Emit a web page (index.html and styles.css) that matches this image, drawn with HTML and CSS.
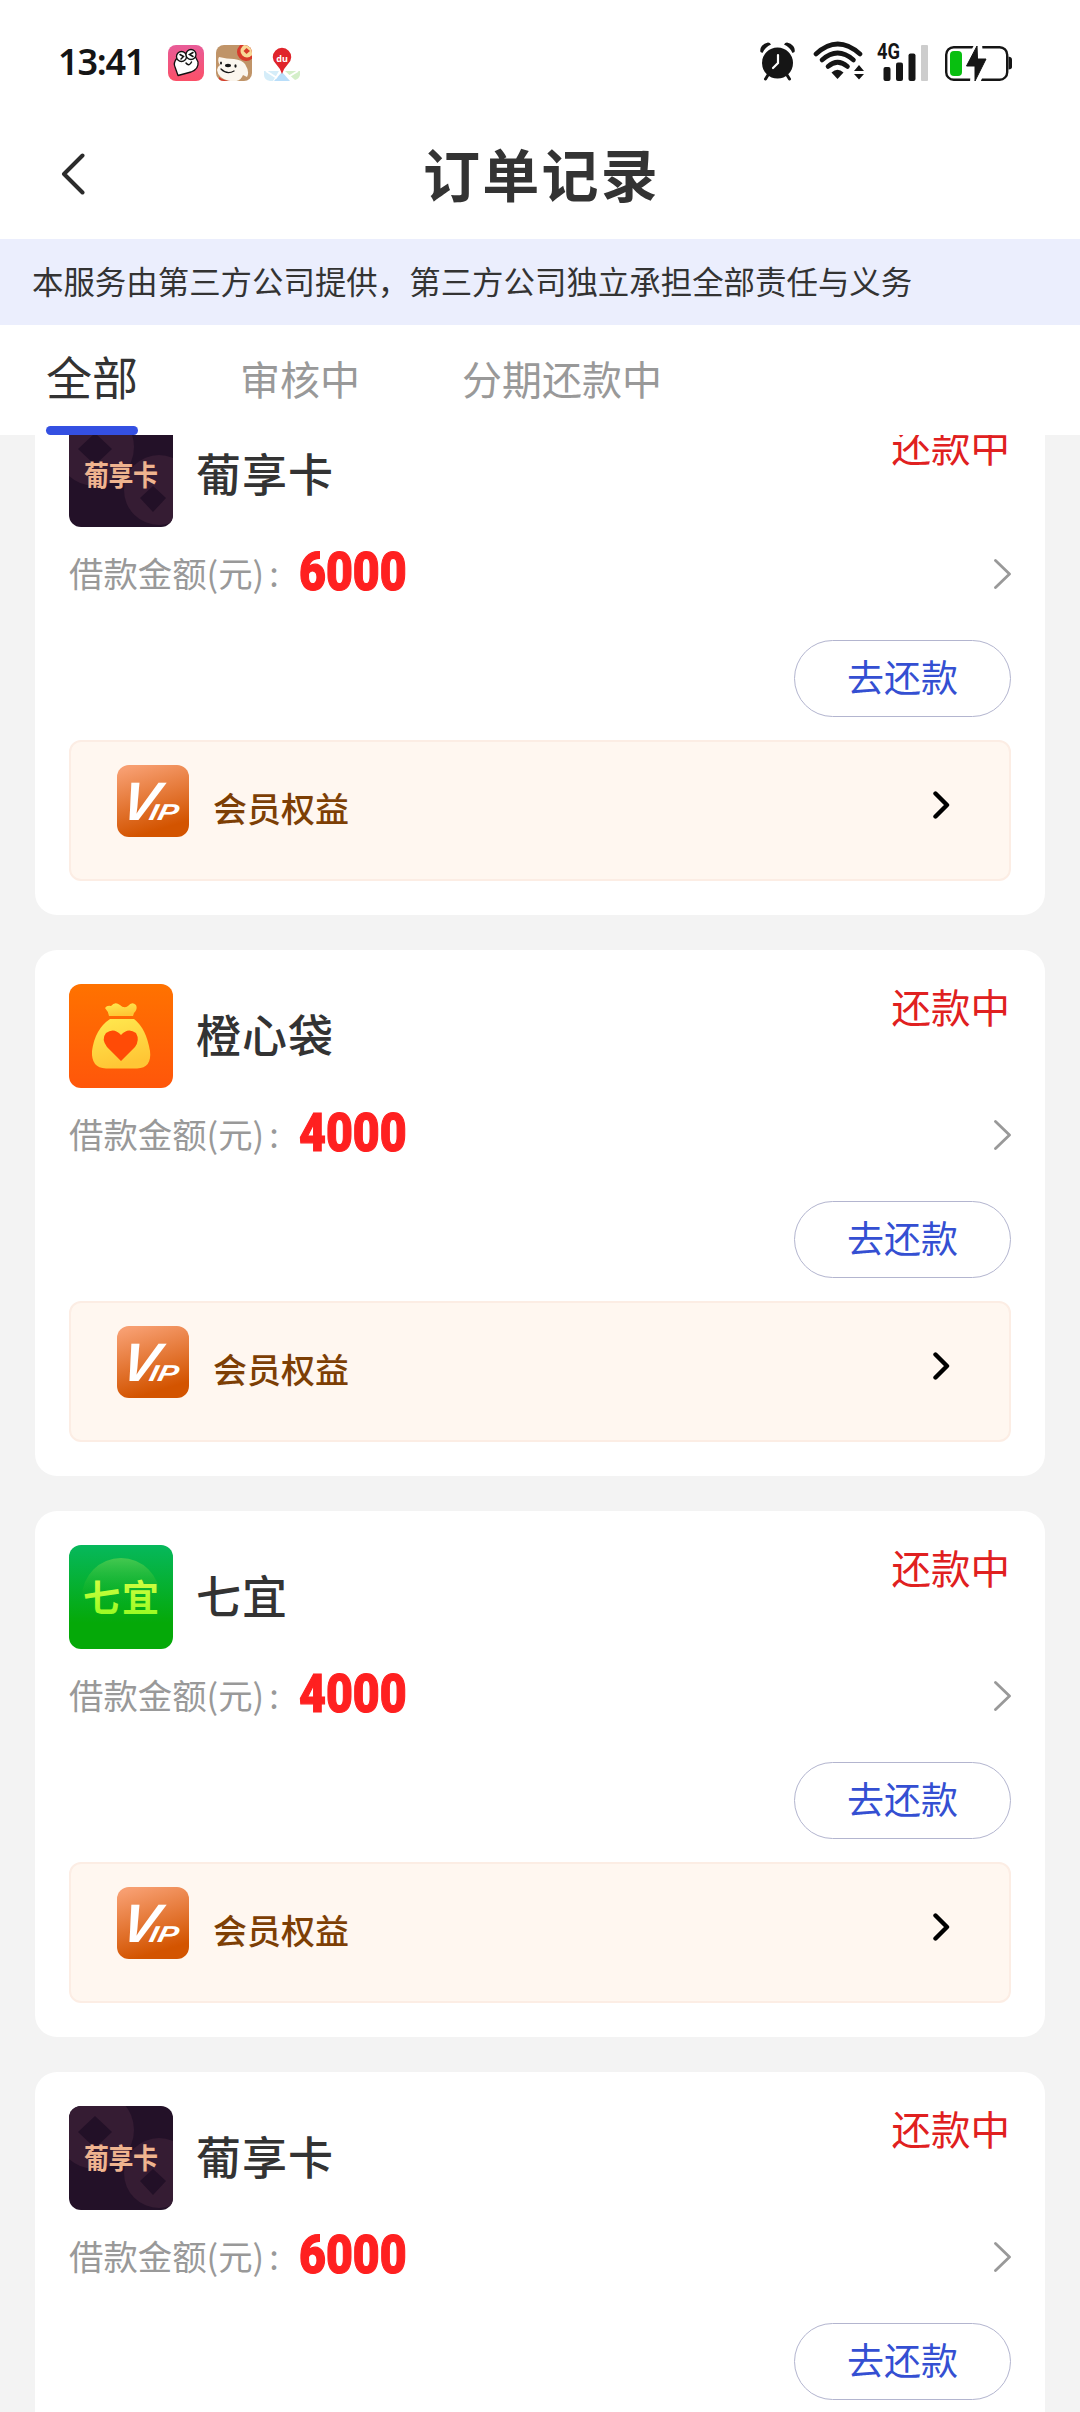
FILE: index.html
```html
<!DOCTYPE html>
<html lang="zh-CN">
<head>
    <meta charset="UTF-8">
    <meta name="viewport" content="width=device-width, initial-scale=1.0">
    <title>订单记录</title>
    <link rel="stylesheet" href="styles.css">
</head>
<body>
    <!-- Shared icons -->
    <svg class="defs" width="0" height="0">
        <defs>
            <linearGradient id="vipBg" x1="0.3" y1="0" x2="0.6" y2="1">
                <stop offset="0" stop-color="#f79e70"/>
                <stop offset="0.9" stop-color="#d35400"/>
            </linearGradient>
            <linearGradient id="bagBg" x1="0" y1="0" x2="0" y2="1">
                <stop offset="0" stop-color="#ff7200"/>
                <stop offset="1" stop-color="#ff560a"/>
            </linearGradient>
            <linearGradient id="bagFill" x1="0" y1="0" x2="0.3" y2="1">
                <stop offset="0" stop-color="#ffe94f"/>
                <stop offset="1" stop-color="#ffc635"/>
            </linearGradient>
            <linearGradient id="greenBg" x1="0" y1="0" x2="0" y2="1">
                <stop offset="0" stop-color="#06b85c"/>
                <stop offset="0.75" stop-color="#05a908"/>
            </linearGradient>
            <linearGradient id="greenGlow" x1="0" y1="0" x2="0" y2="1">
                <stop offset="0" stop-color="#45c850"/>
                <stop offset="0.6" stop-color="#0aae18" stop-opacity="0"/>
            </linearGradient>
            <linearGradient id="limeText" x1="0" y1="0" x2="0" y2="1">
                <stop offset="0" stop-color="#e2ff4a"/>
                <stop offset="1" stop-color="#8dfb1c"/>
            </linearGradient>
            <linearGradient id="pinkBg" x1="0" y1="0" x2="0" y2="1">
                <stop offset="0" stop-color="#e85c98"/>
                <stop offset="1" stop-color="#fb5068"/>
            </linearGradient>
            <clipPath id="appClip"><rect width="36" height="36" rx="8"/></clipPath>
            <symbol id="vip" viewBox="0 0 72 72">
                <rect width="72" height="72" rx="12" fill="url(#vipBg)"/>
                <g transform="translate(0 55) skewX(-12)">
                    <text class="vip-text" x="2" y="0" font-size="54" textLength="36" lengthAdjust="spacingAndGlyphs">V</text>
                    <text class="vip-text" x="31" y="0" font-size="23" textLength="29" lengthAdjust="spacingAndGlyphs">IP</text>
                </g>
            </symbol>
            <symbol id="logo-puxiang" viewBox="0 0 104 104">
                <rect width="104" height="104" fill="#231128"/>
                <circle cx="26" cy="24" r="39" fill="#351c33"/>
                <circle cx="90" cy="67" r="35" fill="#351c33"/>
                <path d="M9 26L26 10L43 26L26 42Z M71 75L84 63L97 75L84 89Z" fill="#221027"/>
                <text x="52" y="0" class="logo-text" font-size="25" fill="#efb48f" textLength="74" transform="translate(0 62.500) scale(1 1.150)">葡享卡</text>
            </symbol>
            <symbol id="logo-bag" viewBox="0 0 104 104">
                <rect width="104" height="104" fill="url(#bagBg)"/>
                <path d="M40 32Q39 27 36 24Q38 21 42 22Q46 17 51 21Q55 25 59 22Q63 17 67 21Q69 25 65 29L64 32Z" fill="url(#bagFill)"/>
                <path d="M41 35H65Q77 44 81 67Q83 84 68 84.500H37Q22 84 23 67Q26 45 41 35Z" fill="url(#bagFill)"/>
                <path d="M52 77L38 63Q32 55 37 49Q45 43 52 51Q59 43 67 49Q71 56 66 63Z" fill="#ff4b06"/>
            </symbol>
            <symbol id="logo-qiyi" viewBox="0 0 104 104">
                <rect width="104" height="104" fill="url(#greenBg)"/>
                <circle cx="52" cy="52" r="39" fill="url(#greenGlow)"/>
                <text x="52" y="67" class="logo-text" font-size="37" fill="url(#limeText)" textLength="76">七宜</text>
            </symbol>
            <symbol id="arrow" viewBox="0 0 17 30">
                <path d="M1.500 1.500L15.500 15L1.500 28.500" fill="none" stroke="#999" stroke-width="2.800" stroke-linecap="round" stroke-linejoin="round"/>
            </symbol>
            <symbol id="arrow-bold" viewBox="0 0 17 28">
                <path d="M2.500 2.500L14 14L2.500 25.500" fill="none" stroke="#000" stroke-width="4.400" stroke-linecap="round" stroke-linejoin="round"/>
            </symbol>
        </defs>
    </svg>

    <div class="status-bar">
        <span class="time">13:41</span>
        <div class="apps">
            <svg width="36" height="36" viewBox="0 0 36 36">
                <rect width="36" height="36" rx="8" fill="url(#pinkBg)"/>
                <path d="M9 13Q5 18 7 22L10 30.500L23 27Q31 24 30 17L27 11Z" fill="#fff" stroke="#111" stroke-width="1.300" stroke-linejoin="round"/>
                <circle cx="13.500" cy="11.500" r="5" fill="#fff" stroke="#111" stroke-width="1.300"/>
                <circle cx="23" cy="9.500" r="5" fill="#fff" stroke="#111" stroke-width="1.300"/>
                <path d="M12 9.500L15.500 11.500L13 14M25 7.500L21.500 9.500L25 11.500M18 18Q21 22 23.500 17" fill="none" stroke="#111" stroke-width="1.500" stroke-linecap="round"/>
            </svg>
            <svg width="36" height="36" viewBox="0 0 36 36">
                <g clip-path="url(#appClip)">
                    <rect width="36" height="36" fill="#c09468"/>
                    <path d="M3 12Q11 14 18 14Q26 15 29 19Q34 27 31 32L27 30Q24 38 13 36Q2 33 1 25Q1 22 4 20Q1 16 3 12Z" fill="#fbf6ee"/>
                    <circle cx="30" cy="7" r="9" fill="#d8392b"/>
                    <circle cx="31" cy="6" r="6.500" fill="#f8d796"/>
                    <path d="M30.500 3L34 6L30.500 9L27.500 6Z" fill="#d8392b"/>
                    <ellipse cx="12" cy="20.500" rx="3" ry="1.700" fill="#171717"/>
                    <ellipse cx="5" cy="18" rx="1" ry="1.600" fill="#171717"/>
                    <ellipse cx="19.500" cy="21" rx="1.100" ry="1.700" fill="#171717"/>
                    <path d="M5 24Q11 30 18 26" fill="none" stroke="#171717" stroke-width="1.300" stroke-linecap="round"/>
                    <path d="M3 32Q8 36 15 36H3Z" fill="#d8392b"/>
                </g>
            </svg>
            <svg width="36" height="36" viewBox="0 0 36 36">
                <path d="M0 26H15L9 36H6Q0 35 0 30Z" fill="#d5edf9"/>
                <path d="M21 26H36V30Q35 34 31 35Z" fill="#d4efc9"/>
                <path d="M18 27L26 36H10Z" fill="#b9defa"/>
                <path d="M2 26L13 33M34 26L24 32" stroke="#fff" stroke-width="2"/>
                <path d="M18 29Q16 23 12 19A9.200 9.200 0 1 1 24 19Q20 23 18 29Z" fill="#e0242b"/>
                <text x="18" y="17" class="pin-text">du</text>
            </svg>
        </div>
        <div class="system">
            <svg width="38" height="40" viewBox="0 0 38 40">
                <circle cx="19.500" cy="22" r="15.500" fill="#151515"/>
                <path d="M2.500 11A10 8 0 0 1 10 1.500Q12 1.500 13 3.500Q7 6 4.500 12ZM36.500 11A10 8 0 0 0 29 1.500Q27 1.500 26 3.500Q32 6 34.500 12Z" fill="#151515"/>
                <path d="M10 34L7.500 38M29 34L31.500 38" stroke="#151515" stroke-width="3" stroke-linecap="round"/>
                <path d="M20 14V22L15 27" fill="none" stroke="#fff" stroke-width="2.200" stroke-linecap="round"/>
            </svg>
            <svg width="52" height="40" viewBox="0 0 52 40">
                <g fill="none" stroke="#151515" stroke-width="4.600" stroke-linecap="round">
                    <path d="M3 13Q24.500 -7 47 13"/>
                    <path d="M9 19Q24.500 5 40.500 19"/>
                    <path d="M15 25.500Q24.500 17 34.500 25.500"/>
                </g>
                <path d="M18.500 31.500Q24.500 26 30.500 31.500L24.500 38Z" fill="#151515"/>
                <path d="M41 30L46 24L51 30ZM41 33L46 38.500L51 33Z" fill="#151515"/>
            </svg>
            <svg class="signal" width="54" height="40" viewBox="0 0 54 40">
                <text x="2" y="18" class="net-text" textLength="23" lengthAdjust="spacingAndGlyphs">4G</text>
                <rect x="8.500" y="26" width="7" height="14" rx="2" fill="#151515"/>
                <rect x="21" y="21.500" width="7" height="18.500" rx="2" fill="#151515"/>
                <rect x="33.500" y="12.500" width="7" height="27.500" rx="2" fill="#151515"/>
                <rect x="46" y="4" width="7" height="36" rx="1" fill="#cdcdcd"/>
            </svg>
            <svg width="68" height="40" viewBox="0 0 68 40">
                <rect x="1.200" y="6.200" width="61" height="32.500" rx="7.500" fill="#fff" stroke="#151515" stroke-width="2.400"/>
                <path d="M63.500 15.500Q67 16 67 18.500V26Q67 28 63.500 28.500Z" fill="#151515"/>
                <rect x="5" y="10" width="12" height="25" rx="4" fill="#08bf10"/>
                <path d="M30 2L17 28H26L25 41L35 42L46 16.500H38L37 2Z" fill="#fff"/>
                <path d="M32 5L21.500 25H30V40L41 18H32.500Z" fill="#151515" stroke="#151515" stroke-width="1" stroke-linejoin="round"/>
            </svg>
        </div>
    </div>

    <header class="nav">
        <svg class="back" width="24" height="42" viewBox="0 0 24 42">
            <path d="M21.500 2.500L3 21L21.500 39.500" fill="none" stroke="#2b2b2b" stroke-width="4" stroke-linecap="round" stroke-linejoin="round"/>
        </svg>
        <h1>订单记录</h1>
    </header>

    <div class="notice">本服务由第三方公司提供，第三方公司独立承担全部责任与义务</div>

    <nav class="tabs">
        <a class="tab active">全部</a>
        <a class="tab">审核中</a>
        <a class="tab">分期还款中</a>
    </nav>

    <main class="list">
        <div class="scroll">
            <section class="card">
                <div class="card-head">
                    <svg class="logo"><use href="#logo-puxiang"/></svg>
                    <h2>葡享卡</h2>
                    <span class="status">还款中</span>
                </div>
                <div class="amount-row">
                    <span class="label">借款金额(元)<i>:</i></span>
                    <span class="amount">6000</span>
                    <svg class="arrow"><use href="#arrow"/></svg>
                </div>
                <div class="actions"><button class="button">去还款</button></div>
                <div class="vip">
                    <svg class="vip-icon"><use href="#vip"/></svg>
                    <span>会员权益</span>
                    <svg class="arrow-bold"><use href="#arrow-bold"/></svg>
                </div>
            </section>

            <section class="card">
                <div class="card-head">
                    <svg class="logo"><use href="#logo-bag"/></svg>
                    <h2>橙心袋</h2>
                    <span class="status">还款中</span>
                </div>
                <div class="amount-row">
                    <span class="label">借款金额(元)<i>:</i></span>
                    <span class="amount">4000</span>
                    <svg class="arrow"><use href="#arrow"/></svg>
                </div>
                <div class="actions"><button class="button">去还款</button></div>
                <div class="vip">
                    <svg class="vip-icon"><use href="#vip"/></svg>
                    <span>会员权益</span>
                    <svg class="arrow-bold"><use href="#arrow-bold"/></svg>
                </div>
            </section>

            <section class="card">
                <div class="card-head">
                    <svg class="logo"><use href="#logo-qiyi"/></svg>
                    <h2>七宜</h2>
                    <span class="status">还款中</span>
                </div>
                <div class="amount-row">
                    <span class="label">借款金额(元)<i>:</i></span>
                    <span class="amount">4000</span>
                    <svg class="arrow"><use href="#arrow"/></svg>
                </div>
                <div class="actions"><button class="button">去还款</button></div>
                <div class="vip">
                    <svg class="vip-icon"><use href="#vip"/></svg>
                    <span>会员权益</span>
                    <svg class="arrow-bold"><use href="#arrow-bold"/></svg>
                </div>
            </section>

            <section class="card">
                <div class="card-head">
                    <svg class="logo"><use href="#logo-puxiang"/></svg>
                    <h2>葡享卡</h2>
                    <span class="status">还款中</span>
                </div>
                <div class="amount-row">
                    <span class="label">借款金额(元)<i>:</i></span>
                    <span class="amount">6000</span>
                    <svg class="arrow"><use href="#arrow"/></svg>
                </div>
                <div class="actions"><button class="button">去还款</button></div>
            </section>
        </div>
    </main>
</body>
</html>
```
FILE: styles.css
```css
* {
    box-sizing: border-box;
}
body {
    margin: 0;
    height: 2412px;
    display: flex;
    flex-direction: column;
    overflow: hidden;
    background-color: #fff;
    color: #333;
    font-family: "Noto Sans CJK SC", sans-serif;
}
svg {
    display: block;
    flex: none;
}
.defs {
    position: absolute;
}

/* Status bar */
.status-bar {
    height: 110px;
    flex: none;
    display: flex;
    align-items: center;
    padding: 16px 67px 0 58px;
}
.time {
    width: 110px;
    margin-top: -2px;
    font-family: "Noto Sans", sans-serif;
    font-size: 36px;
    font-weight: 600;
    letter-spacing: -1.2px;
    line-height: 36px;
    color: #151515;
}
.apps {
    display: flex;
    gap: 12px;
}
.system {
    display: flex;
    margin-left: auto;
    margin-top: -4px;
}
.system svg:nth-child(1) {
    margin-right: 17px;
}
.system svg:nth-child(2) {
    margin-right: 10px;
}
.system svg:nth-child(3) {
    margin-right: 16px;
}
.signal {
    overflow: visible;
}
.pin-text {
    font: 700 9px "Noto Sans", sans-serif;
    fill: #fff;
    text-anchor: middle;
}
.net-text {
    font: 700 22px Roboto, sans-serif;
    fill: #151515;
}

/* Title */
.nav {
    height: 129px;
    flex: none;
    display: flex;
    align-items: center;
    padding: 0 62px 0 61px;
}
.nav .back {
    margin-top: -1px;
}
.nav h1 {
    flex: 1;
    margin: 0 20px 6px 0;
    text-align: center;
    font-size: 57px;
    font-weight: 700;
    letter-spacing: 2.2px;
    line-height: 80px;
}
.notice {
    height: 86px;
    flex: none;
    padding-left: 32px;
    background-color: #ebeefd;
    font-size: 31.45px;
    line-height: 83px;
    white-space: nowrap;
}

/* Tabs */
.tabs {
    height: 110px;
    flex: none;
    display: flex;
    gap: 102px;
    padding-left: 46px;
}
.tab {
    font-size: 40px;
    line-height: 106px;
    color: #999;
}
.tab.active {
    display: flex;
    flex-direction: column;
    font-size: 46px;
    line-height: 101px;
    color: #333;
}
.tab.active::after {
    content: "";
    height: 9px;
    background-color: #3450e2;
    border-radius: 5px;
}

/* Orders */
.list {
    flex: 1;
    min-height: 0;
    overflow: hidden;
    background-color: #f3f3f3;
}
.scroll {
    display: flex;
    flex-direction: column;
    gap: 35px;
    margin-top: -46px;
    padding: 0 35px;
}
.card {
    height: 526px;
    padding: 34px;
    background-color: #fff;
    border-radius: 22px;
}
.card-head {
    height: 104px;
    display: flex;
}
.logo {
    width: 104px;
    height: 104px;
    border-radius: 12px;
}
.logo-text {
    font-family: "Noto Sans CJK SC", sans-serif;
    font-weight: 700;
    text-anchor: middle;
}
.card h2 {
    margin: 0 0 0 23px;
    font-size: 45px;
    font-weight: 500;
    letter-spacing: 1px;
    line-height: 99px;
}
.status {
    margin-left: auto;
    margin-right: 1px;
    font-size: 39.5px;
    line-height: 43px;
    color: #e02020;
}
.amount-row {
    height: 94px;
    display: flex;
    align-items: center;
}
.label {
    width: 230px;
    font-size: 34.4px;
    margin-top: -4px;
    color: #999;
}
.label i {
    font-style: normal;
    margin-left: 5px;
}
.amount {
    margin-top: -5px;
    font-family: Roboto, sans-serif;
    font-size: 54px;
    font-weight: 900;
    line-height: 60px;
    color: #ff2020;
    -webkit-text-stroke: 1.2px #ff2020;
    transform: scaleX(0.86);
    transform-origin: left;
}
.arrow {
    width: 17px;
    height: 30px;
    margin-left: auto;
}
.actions {
    display: flex;
    justify-content: flex-end;
    margin: 19px 0 23px;
}
.button {
    width: 217px;
    height: 77px;
    padding: 0 0 6px;
    background: #fff;
    border: 1px solid #b3b5cf;
    border-radius: 39px;
    font-family: inherit;
    font-size: 37px;
    line-height: 70px;
    color: #344fd2;
}
.vip {
    height: 141px;
    display: flex;
    padding: 23px 59px 0 46px;
    background-color: #fff7f0;
    border: 2px solid #fcede4;
    border-radius: 12px;
}
.vip-icon {
    width: 72px;
    height: 72px;
}
.vip-text {
    font-family: "Liberation Sans", sans-serif;
    font-weight: 700;
    font-style: italic;
    fill: #fff;
}
.vip span {
    margin-left: 24px;
    font-size: 34px;
    font-weight: 500;
    line-height: 85px;
    color: #7d3f05;
}
.arrow-bold {
    width: 17px;
    height: 28px;
    margin: 26px 0 0 auto;
}
```
